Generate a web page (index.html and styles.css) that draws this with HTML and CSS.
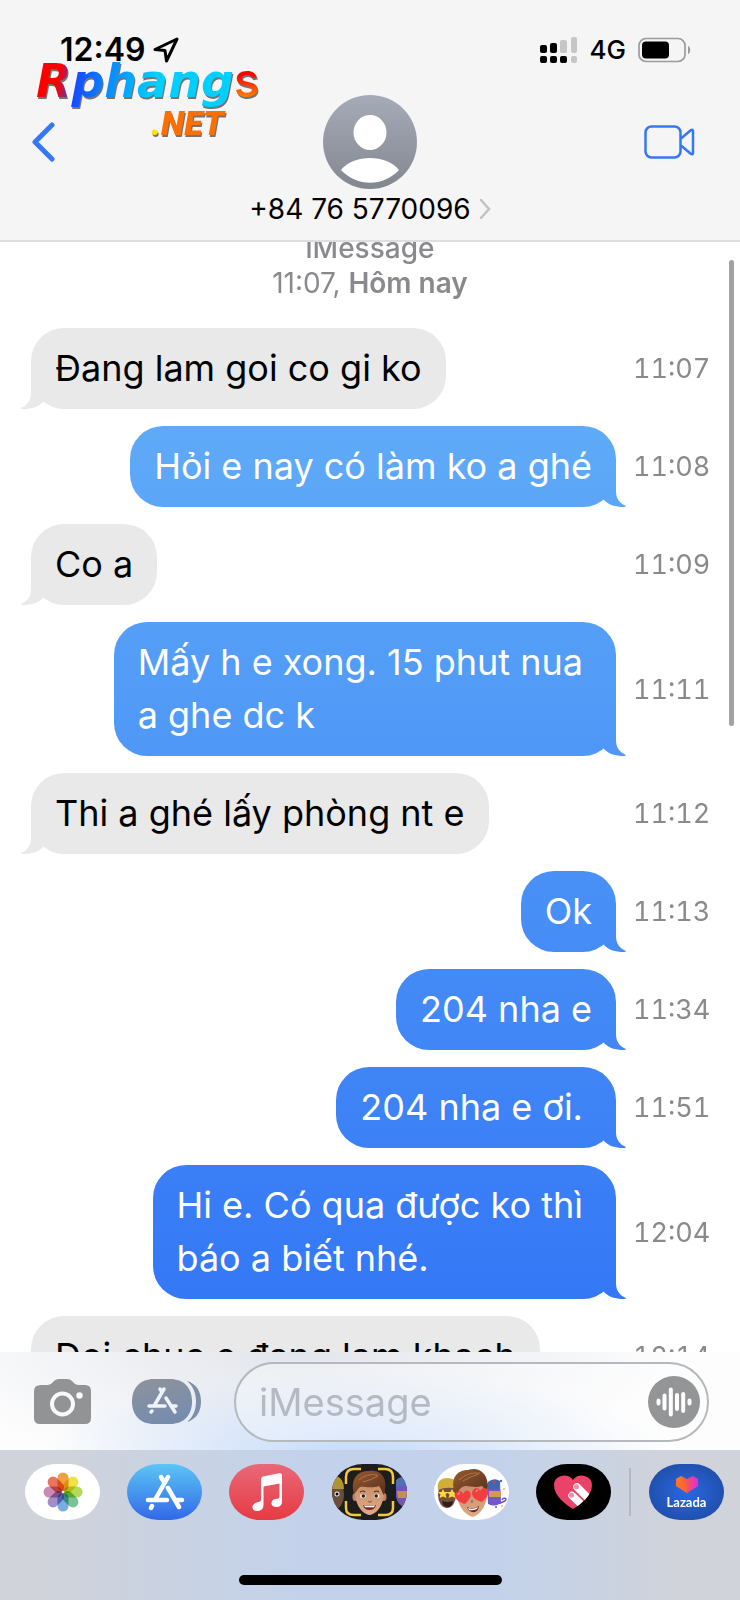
FILE: index.html
```html
<!DOCTYPE html>
<html lang="vi">
<head>
    <meta charset="UTF-8">
    <meta name="viewport" content="width=device-width, initial-scale=1.0">
    <title>iMessage</title>
    <link rel="stylesheet" href="styles.css">
</head>
<body>
<div class="phone">

    <!-- Header -->
    <header class="header">
        <div class="logo">
            <div class="logo-name"><span class="logo-word">Rphang</span><span class="logo-s">s</span></div>
            <div class="logo-net"><span class="logo-dot">.</span><span class="logo-tld">NET</span></div>
        </div>

        <div class="status-bar">
            <div class="status-left">
                <span class="clock">12:49</span>
                <svg width="26" height="26" viewBox="0 0 26 26" fill="none" stroke="#000" stroke-width="3" stroke-linejoin="round"><path d="M24 2 2 12.500 12 13.500 13.500 24Z"/></svg>
            </div>
            <div class="status-right">
                <svg width="38" height="28" viewBox="0 0 38 28">
                    <g fill="#000"><rect x="0" y="9" width="7" height="8" rx="2"/><rect x="10" y="7" width="7" height="10" rx="2"/><rect x="0" y="20" width="7" height="7" rx="2"/><rect x="10" y="20" width="7" height="7" rx="2"/><rect x="20" y="20" width="7" height="7" rx="2"/></g>
                    <g fill="#c6c6c6"><rect x="20" y="4" width="7" height="13" rx="2"/><rect x="31" y="1" width="6" height="16" rx="2"/><rect x="31" y="20" width="6" height="7" rx="2"/></g>
                </svg>
                <span class="network">4G</span>
                <svg width="53" height="26" viewBox="0 0 53 26">
                    <rect x="1" y="1.500" width="46" height="23" rx="7" fill="none" stroke="#9b9b9b" stroke-width="1.700"/>
                    <rect x="4" y="4.500" width="27" height="17" rx="4"/>
                    <path d="M50 9c3 1 3 7 0 8z" fill="#9b9b9b"/>
                </svg>
            </div>
        </div>

        <div class="nav">
            <button class="icon-btn back-btn" aria-label="Back">
                <svg width="24" height="42" viewBox="0 0 24 42" fill="none" stroke="#3478f6" stroke-width="5" stroke-linecap="round" stroke-linejoin="round"><path d="M20 4 3 21 20 38"/></svg>
            </button>
            <div class="contact">
                <svg width="94" height="94" viewBox="0 0 94 94">
                    <defs><linearGradient id="avatarBg" x2="0" y2="1"><stop stop-color="#a6abb9"/><stop offset="1" stop-color="#83878f"/></linearGradient></defs>
                    <circle cx="47" cy="47" r="47" fill="url(#avatarBg)"/>
                    <ellipse cx="47" cy="37.500" rx="16.500" ry="17.500" fill="#fff"/>
                    <path d="M18 75C30 59 64 59 76 75 60 92 34 92 18 75Z" fill="#fff"/>
                </svg>
                <a class="contact-link" href="#">+84 76 5770096
                    <svg width="12" height="20" viewBox="0 0 12 20" fill="none" stroke="#c2c2c4" stroke-width="2.500" stroke-linecap="round"><path d="M2 1 10 10 2 19"/></svg>
                </a>
            </div>
            <button class="icon-btn video-btn" aria-label="Video">
                <svg width="51" height="34" viewBox="0 0 51 34" fill="none" stroke="#3478f6" stroke-width="2.500" stroke-linejoin="round"><rect x="1.500" y="1.500" width="35" height="31" rx="6"/><path d="M37 13.500 47 5Q49 4 49 6V28Q49 30 47 29L37 20.500"/></svg>
            </button>
        </div>
    </header>

    <!-- Messages -->
    <main class="thread">
        <div class="stamp">
            <div class="stamp-app">iMessage</div>
            <div>11:07, <b>Hôm nay</b></div>
        </div>
        <div class="row"><p class="bubble received">Đang lam goi co gi ko</p><time class="time">11:07</time></div>
        <div class="row"><p class="bubble sent">Hỏi e nay có làm ko a ghé</p><time class="time">11:08</time></div>
        <div class="row"><p class="bubble received">Co a</p><time class="time">11:09</time></div>
        <div class="row"><p class="bubble sent roomy">Mấy h e xong. 15 phut nua<br>a ghe dc k</p><time class="time">11:11</time></div>
        <div class="row"><p class="bubble received">Thi a ghé lấy phòng nt e</p><time class="time">11:12</time></div>
        <div class="row"><p class="bubble sent">Ok</p><time class="time">11:13</time></div>
        <div class="row"><p class="bubble sent">204 nha e</p><time class="time">11:34</time></div>
        <div class="row"><p class="bubble sent roomy">204 nha e ơi.</p><time class="time">11:51</time></div>
        <div class="row"><p class="bubble sent roomy">Hi e. Có qua được ko thì<br>báo a biết nhé.</p><time class="time">12:04</time></div>
        <div class="row"><p class="bubble received">Doi chuc e đang lam khach</p><time class="time">12:14</time></div>
        <div class="scrollbar"></div>
    </main>

    <!-- Compose bar -->
    <div class="compose">
        <button class="icon-btn" aria-label="Camera">
            <svg width="58" height="46" viewBox="0 0 58 46">
                <path fill="#929394" d="M7 6H14Q17 6 19 3L20 2Q22 0 25 0H33Q36 0 38 2L39 3Q41 6 44 6H51Q57 6 57 12V39Q57 45 51 45H6Q0 45 0 39V12Q0 6 7 6Z"/>
                <circle cx="28.500" cy="25" r="10.500" fill="none" stroke="#f8f9fb" stroke-width="4"/>
                <circle cx="45.500" cy="16.500" r="3.200" fill="#f8f9fb"/>
            </svg>
        </button>
        <button class="icon-btn apps-btn" aria-label="Apps">
            <svg width="70" height="46" viewBox="0 0 70 46">
                <defs><linearGradient id="appsBg" x2=".3" y2="1"><stop stop-color="#8d939b"/><stop offset="1" stop-color="#778cad"/></linearGradient></defs>
                <path fill="url(#appsBg)" d="M22 0H38C52 0 60 9 60 22.500S52 45 38 45H22C8 45 0 36 0 22.500S8 0 22 0Z"/>
                <path fill="#7f8fa8" d="M55 2C65 5 69 13 69 22.500S65 40 55 43C61 38 64 31 64 22.500S61 7 55 2Z"/>
                <g stroke="#eef3fa" stroke-width="3.500" stroke-linecap="round"><path d="M32 10 22 27M28 10l2 3M34 19l9 14M17 27H33M39 27h5M20 32l-1 1"/></g>
            </svg>
        </button>
        <div class="field">
            <input class="message-input" type="text" placeholder="iMessage" aria-label="iMessage">
            <button class="icon-btn" aria-label="Audio">
                <svg width="52" height="52" viewBox="0 0 52 52">
                    <circle cx="26" cy="26" r="26" fill="#949596"/>
                    <g stroke="#fff" stroke-width="4" stroke-linecap="round"><path d="M10.500 24.500v3M16.500 19.500v13M22.800 13.500v25M29 19v14M35.200 18v17M41.500 24.500v3"/></g>
                </svg>
            </button>
        </div>
    </div>

    <!-- App dock -->
    <footer class="dock">
        <div class="dock-row">
            <div class="dock-apps">
                <button class="app photos" aria-label="Photos">
                    <svg width="40" height="40" viewBox="-20 -20 40 40">
                        <g class="petals">
                            <rect x="-5.500" y="-19.500" width="11" height="18.500" rx="5.500" fill="#f0a040"/>
                            <rect x="-5.500" y="-19.500" width="11" height="18.500" rx="5.500" fill="#f0e040" transform="rotate(45)"/>
                            <rect x="-5.500" y="-19.500" width="11" height="18.500" rx="5.500" fill="#b8d858" transform="rotate(90)"/>
                            <rect x="-5.500" y="-19.500" width="11" height="18.500" rx="5.500" fill="#79c398" transform="rotate(135)"/>
                            <rect x="-5.500" y="-19.500" width="11" height="18.500" rx="5.500" fill="#79ace0" transform="rotate(180)"/>
                            <rect x="-5.500" y="-19.500" width="11" height="18.500" rx="5.500" fill="#a08fc8" transform="rotate(225)"/>
                            <rect x="-5.500" y="-19.500" width="11" height="18.500" rx="5.500" fill="#c98bb5" transform="rotate(270)"/>
                            <rect x="-5.500" y="-19.500" width="11" height="18.500" rx="5.500" fill="#e87560" transform="rotate(315)"/>
                        </g>
                    </svg>
                </button>
                <button class="app store" aria-label="App Store">
                    <svg width="40" height="38" viewBox="0 0 40 38" fill="none" stroke="#fff" stroke-width="4.500" stroke-linecap="round"><path d="M23 4 11 25M16 4l3 5M23 15l11 19M3 27H22M31 27h6M7 33l-1 2"/></svg>
                </button>
                <button class="app music" aria-label="Music">
                    <svg width="30" height="38" viewBox="0 0 30 38" fill="#fff"><path d="M9 6Q9 4 11 3.500L27 .300Q30 0 30 2V28C30 33 27 34 24 34 18 34 18 27 23.500 26 26.500 25.500 27.500 25.500 27.500 23V10.500L11.500 13.500V32C11.500 36.500 8 38 5 38-1 38-1 31 4.500 29.500 8 29 9 28.500 9 26Z"/></svg>
                </button>
                <button class="app memoji-camera" aria-label="Memoji">
                    <svg width="75" height="56" viewBox="0 0 75 56">
                        <defs>
                            <linearGradient id="skin" x2="0" y2="1"><stop stop-color="#c58b66"/><stop offset="1" stop-color="#e0aa87"/></linearGradient>
                            <linearGradient id="hair" x2="1" y2="1"><stop stop-color="#985a32"/><stop offset="1" stop-color="#58301c"/></linearGradient>
                        </defs>
                        <ellipse cx="3" cy="31" rx="9" ry="14" fill="#6b4f3b"/><path d="M-5 25Q-4 11 4 12 12 14 12 25Z" fill="#b09332"/><circle cx="5" cy="30" r="2.500" fill="#eee"/><circle cx="5" cy="30" r="1.500"/>
                        <path d="M64 16Q69 11 76 14V44Q66 43 64 33Z" fill="#7155b8"/><path d="M64 17Q68 12 76 13V21L64 23Z" fill="#4f72b4"/><path d="M65 27h11v7H66Z" fill="#be9348"/>
                        <ellipse cx="23" cy="33" rx="2.500" ry="4" fill="#bd815e"/><ellipse cx="52" cy="33" rx="2.500" ry="4" fill="#bd815e"/>
                        <path d="M23 20Q37 12 52 20C54 38 46 50 37.500 51 29 50 21 38 23 20Z" fill="url(#skin)"/>
                        <path d="M22 30C18 14 26 7 37 7 48 5 57 13 52 31 50 29 50 26 47 22 39 25 31 22 28 23 25 25 25 28 22 30Z" fill="url(#hair)"/>
                        <path d="M27 16Q35 9 46 11M31 18Q39 16 46 12" fill="none" stroke="#b0754a"/>
                        <path d="M28 28q3-2 5 0M42 28q3-2 5 0" fill="none" stroke="#5d351f" stroke-width="1.200"/>
                        <ellipse cx="31" cy="32" rx="2.800" ry="2" fill="#fff"/><ellipse cx="44.500" cy="32" rx="2.800" ry="2" fill="#fff"/><circle cx="31.300" cy="32" r="1.800" fill="#2b1b13"/><circle cx="44.200" cy="32" r="1.800" fill="#2b1b13"/>
                        <path d="M36 37q2 2 4 0" fill="none" stroke="#a66c4e" stroke-width="1.200"/>
                        <path d="M31 41Q37 42 44 41 43 46 37.500 46 32 46 31 41Z" fill="#7c2925"/><path d="M32 41.300Q37 42.300 43 41.300L42 43.300H33Z" fill="#fff"/>
                        <path d="M14 20V13Q14 5 22 5H29M46 5H53Q61 5 61 13V20M14 37V44Q14 51 22 51H29M46 51H53Q61 51 61 44V37" fill="none" stroke="#f5c83d" stroke-width="2.500"/>
                    </svg>
                </button>
                <button class="app memoji-stickers" aria-label="Stickers">
                    <svg width="75" height="56" viewBox="0 0 75 56">
                        <ellipse cx="13" cy="31" rx="9" ry="13" fill="#735039"/><path d="M4 26Q2 14 14 14 25 15 23 25Q13 22 4 26Z" fill="#d1ae38"/>
                        <path d="m9 25 1.500 3 3.500 0-2.500 2.500 1 3.500-3.500-1.500-3.500 1.500 1-3.500L4 28h3.500zM18 25l1.500 3h3.500l-2.500 2.500 1 3.500-3.500-1.500-3.500 1.500 1-3.500-2.500-2.500h3.500z" fill="#ffd73d"/><path d="M8 37q5 2 11 0-1 6-5 6-5 0-6-6Z" fill="#321b1a"/>
                        <path d="M53 20Q59 13 66 18L67 38Q62 44 54 40Z" fill="#7257c6"/><path d="M54 18Q60 13 66 17L65 25H54Z" fill="#3d68b1"/><path d="M55 27h12v6H55Z" fill="#d79b44"/><path d="M60 40q6 0 11-3c3-3-2-4-3-1" fill="none" stroke="#7454c0" stroke-width="1.500"/><circle cx="60" cy="18" r="1.500" fill="#df3843"/>
                        <g fill="#4466d6"><circle cx="67" cy="17" r="1.200"/><circle cx="62" cy="43" r="1"/></g><g fill="#f1c62f"><circle cx="70" cy="25" r="1"/><circle cx="68" cy="42" r="1"/></g>
                        <path d="M22 24Q37 13 54 24C54 38 48 50 39 53 29 51 22 38 22 24Z" fill="url(#skin)"/>
                        <path d="M21 30C16 15 22 6 34 6 45 2 57 10 53 29 51 28 51 25 48 22 38 25 32 19 27 24 24 27 24 29 21 30Z" fill="url(#hair)"/>
                        <path d="M25 16Q33 8 46 9M29 17Q37 12 45 10" fill="none" stroke="#b0754a"/>
                        <path d="M31 40C19 37 19 28 25 27q3 0 4 3 2-5 6-3 5 4-4 13ZM48 38c-12-3-12-12-6-14q3 0 4 3 3-5 7-2 4 5-5 13Z" fill="#f23e3e"/><path d="M24 31q0-2 2-2M42 28q0-2 2-2" fill="none" stroke="#ff9992"/>
                        <path d="M38 36v3" stroke="#ad7454" stroke-width="2"/><path d="M33 43Q39 46 45 42 44 49 38 48 34 47 33 43Z" fill="#7b211f"/><path d="M34 44q5 2 10-1l-1 2q-4 2-8 1Z" fill="#fff"/>
                    </svg>
                </button>
                <button class="app touch" aria-label="Digital Touch">
                    <svg width="40" height="36" viewBox="0 0 40 36">
                        <defs><clipPath id="touchHeart"><path d="M20 35C12 30 1 22 1 11 1 1 15-2 20 6 25-2 39 1 39 11 39 22 28 30 20 35Z"/></clipPath></defs>
                        <g clip-path="url(#touchHeart)">
                            <rect width="40" height="36" fill="#ea4269"/>
                            <path d="M24 13 38 27M19 21.500 32 34" stroke="#fff" stroke-width="7.500" stroke-linecap="round"/>
                            <circle cx="23.500" cy="12.700" r="2.500" fill="#f38aa2"/><circle cx="18.500" cy="21.200" r="2.500" fill="#f38aa2"/>
                        </g>
                    </svg>
                </button>
            </div>
            <div class="divider"></div>
            <button class="app lazada">
                <svg width="22" height="17" viewBox="0 0 22 17">
                    <defs><linearGradient id="lazHeart"><stop stop-color="#ff8a16"/><stop offset=".5" stop-color="#f4535b"/><stop offset="1" stop-color="#e229e4"/></linearGradient></defs>
                    <path fill="url(#lazHeart)" d="M0 3 5 0 11 3 17 0 22 3V10L11 17 0 10Z"/><path fill="#ff6a28" opacity=".7" d="M0 3 11 8V17L0 10Z"/>
                </svg>
                <span>Lazada</span>
            </button>
        </div>
        <div class="home-bar"></div>
    </footer>

</div>
</body>
</html>
```

FILE: styles.css
```css
* { box-sizing: border-box; }

body {
    margin: 0;
    background: #fff;
    color: #000;
    font-family: 'Inter', 'Liberation Sans', sans-serif;
}

svg { display: block; flex: none; }
button { font-family: inherit; cursor: pointer; }

.phone {
    position: relative;
    display: flex;
    flex-direction: column;
    height: 100vh;
    overflow: hidden;
}

.icon-btn {
    padding: 0;
    border: none;
    background: none;
    flex: none;
}

/* Header */
.header {
    position: relative;
    flex: none;
    background: #f5f5f5;
    border-bottom: 2px solid #dededf;
}
.status-bar {
    display: flex;
    justify-content: space-between;
    align-items: center;
    height: 95px;
    padding: 4px 49px 0 60px;
}
.status-left, .status-right { display: flex; align-items: center; }
.status-left { gap: 8px; }
.status-right { gap: 12px; }
.clock { font-size: 32px; font-weight: 600; }
.network { font-size: 26px; font-weight: 500; }

.nav {
    display: grid;
    grid-template-columns: 1fr auto 1fr;
    padding: 0 32px 11px;
}
.back-btn, .video-btn { display: flex; align-items: center; height: 94px; }
.back-btn { justify-self: start; }
.video-btn { justify-self: end; margin-right: 13px; }
.contact {
    display: flex;
    flex-direction: column;
    align-items: center;
}
.contact-link {
    display: flex;
    align-items: center;
    gap: 8px;
    color: #000;
    font-size: 28px;
    line-height: 40px;
    text-decoration: none;
}

/* Logo over the header */
.logo {
    position: absolute;
    top: 53px;
    left: 36px;
    z-index: 1;
    filter: drop-shadow(1px 2px 0 #333a);
    pointer-events: none;
}
.logo-name { display: flex; align-items: baseline; line-height: 54px; }
.logo-word {
    font: italic bold 46px/54px 'DejaVu Sans', sans-serif;
    background: linear-gradient(100deg, #f00 13%, #144dff 22%, #0a8cff 38%, #00cfff 60%);
    -webkit-background-clip: text;
    background-clip: text;
    color: transparent;
}
.logo-s {
    font-size: 48px;
    font-weight: 500;
    background: linear-gradient(#f00 40%, #ff7b00 80%);
    -webkit-background-clip: text;
    background-clip: text;
    color: transparent;
}
.logo-net {
    padding-left: 115px;
    color: #ff6f00;
    font: italic 900 34px/30px 'Roboto', sans-serif;
}
.logo-dot { color: #ffe600; }

/* Messages */
.thread {
    position: relative;
    flex: 1;
    min-height: 0;
    overflow: hidden;
    padding: 0 31px;
}
.stamp {
    margin: -11px 0 27px;
    color: #8a8a8e;
    font-size: 28px;
    line-height: 35px;
    text-align: center;
}
.stamp-app { font-weight: 500; }
.stamp b { font-weight: 600; }

.row {
    display: grid;
    grid-template-columns: 1fr 76px;
    gap: 17px;
    align-items: center;
    margin-bottom: 17px;
}
.bubble {
    position: relative;
    margin: 0;
    padding: 14px 24px;
    border-radius: 33px;
    font-size: 36px;
    line-height: 53px;
    white-space: nowrap;
}
.roomy { padding-right: 33px; }
.received { justify-self: start; background: #e9e9e9; }
.sent {
    justify-self: end;
    color: #fff;
    background: linear-gradient(#5faaf7 27%, #3478f6 81%) fixed;
}

/* Bubble tails */
.bubble::after {
    content: "";
    position: absolute;
    bottom: 0;
    width: 36px;
    height: 34px;
    background: inherit;
    clip-path: path("M25 0V18C25 25 28 30 35 33Q35 34 33 34C24 34 18 32 13 27L8 10Z");
}
.sent::after { right: -11px; }
.received::after { left: -11px; transform: scaleX(-1); }

.time {
    color: #8a8a8e;
    font-size: 27px;
    font-variant-numeric: tabular-nums;
    white-space: nowrap;
}
.scrollbar {
    position: absolute;
    top: 18px;
    right: 6px;
    width: 5px;
    height: 42%;
    border-radius: 3px;
    background: #a2a2a2;
}

/* Compose bar */
.compose {
    display: flex;
    align-items: center;
    flex: none;
    padding: 10px 31px 8px 34px;
    background:
        radial-gradient(ellipse 42% 85% at 48% 105%, #c5dbfa, #c5dbfa00),
        radial-gradient(ellipse 52% 120% at 40% 0, #e2e5ec, #e2e5ec00),
        #fdfdfd;
}
.apps-btn { margin: 0 32px 0 40px; }
.field {
    display: flex;
    align-items: center;
    flex: 1;
    min-width: 0;
    height: 80px;
    padding: 0 7px 0 23px;
    border: 2px solid #b5b8bd;
    border-radius: 40px;
    background: #ffffff55;
}
.message-input {
    flex: 1;
    min-width: 0;
    padding: 0;
    border: none;
    outline: none;
    background: none;
    font-family: inherit;
    font-size: 38px;
}
.message-input::placeholder { color: #b4bac4; opacity: 1; }

/* App dock */
.dock {
    display: flex;
    flex-direction: column;
    justify-content: space-between;
    flex: none;
    height: 150px;
    padding: 14px 16px 15px;
    background: linear-gradient(90deg, #d0d3da 5%, #c3d2ea 40%, #c3d2ea 68%, #d0d3da 92%);
}
.dock-row { display: flex; align-items: center; gap: 18px; padding-left: 9px; }
.dock-apps { display: flex; flex: 1; justify-content: space-between; }
.app {
    display: flex;
    flex-direction: column;
    align-items: center;
    justify-content: center;
    width: 75px;
    height: 56px;
    padding: 0;
    border: none;
    border-radius: 31px / 28px;
    overflow: hidden;
}
.photos, .memoji-stickers { background: #fff; }
.petals rect { mix-blend-mode: multiply; }
.store { background: linear-gradient(#5cc5f5, #3268e8); }
.music { background: linear-gradient(#e96878, #e63b43); }
.memoji-camera { background: #1d1d1d; }
.touch { background: #000; }
.lazada {
    gap: 2px;
    background: radial-gradient(#2b68e0, #1c479c);
    color: #fff;
    font-family: 'Lato', sans-serif;
    font-size: 13px;
    font-weight: bold;
    line-height: 14px;
}
.divider { width: 2px; height: 48px; background: #b0b9c8; }
.home-bar {
    align-self: center;
    width: 263px;
    height: 10px;
    border-radius: 5px;
    background: #000;
}
```
